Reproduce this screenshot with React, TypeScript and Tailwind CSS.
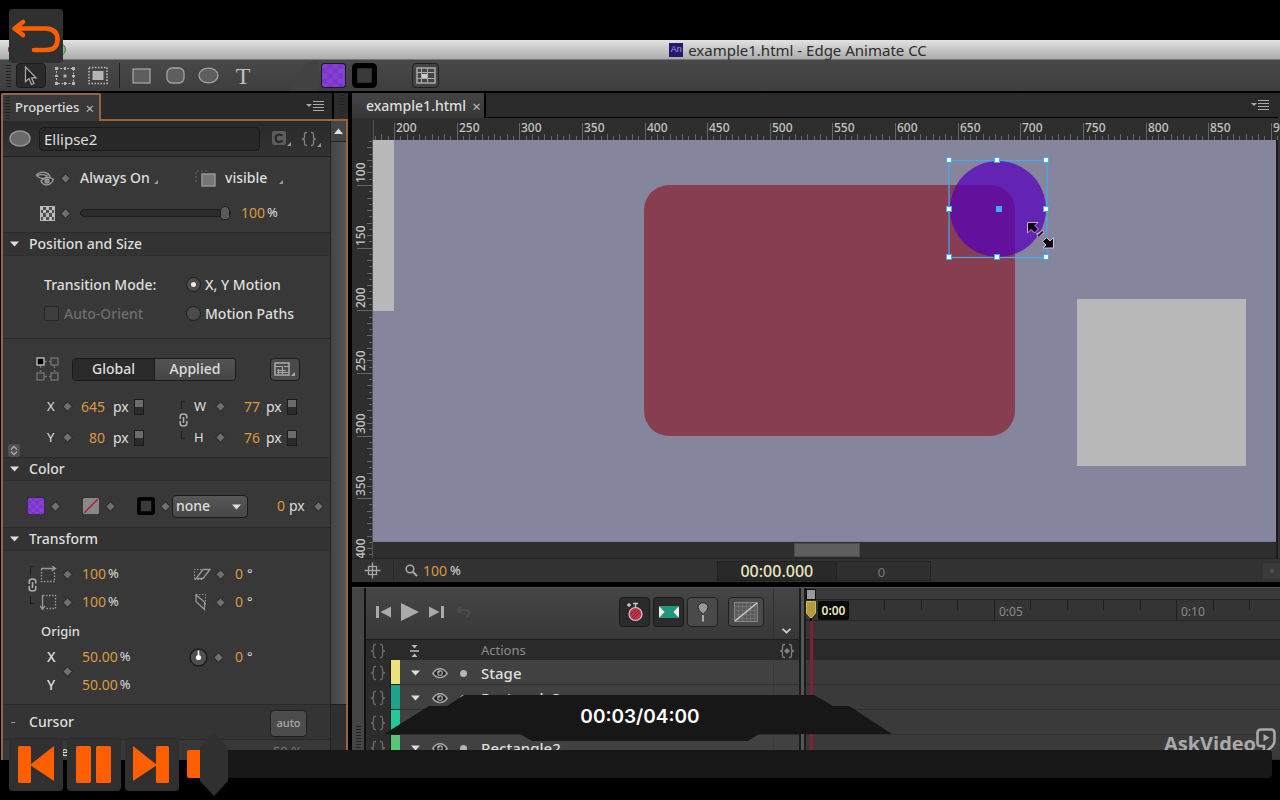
import React, { useState } from "react";

const ORANGE = "#ff5f00";

const Diamond = ({ label }: { label: string }) => (
  <button aria-label={label} className="flex w-5 shrink-0 items-center justify-center">
    <svg width="11" height="11" viewBox="0 0 11 11">
      <path d="M5.5 0.8 10.2 5.5 5.5 10.2 0.8 5.5Z" fill="#707070" stroke="#1f1f1f" />
    </svg>
  </button>
);

const Corner = () => (
  <svg width="4" height="4" viewBox="0 0 5 5" className="shrink-0">
    <path d="M5 0V5H0Z" fill="#999" />
  </svg>
);

const Braces = ({ dot = false, dim = false }: { dot?: boolean; dim?: boolean }) => (
  <svg width="16" height="16" viewBox="0 0 16 16" fill="none" stroke={dim ? "#6a6a6a" : "#808080"} strokeWidth="1.3">
    <path d="M6 1.5H5Q3.5 1.5 3.5 3.5V6Q3.5 8 1 8Q3.5 8 3.5 10V12.5Q3.5 14.5 5 14.5H6" />
    <path d="M10 1.5H11Q12.5 1.5 12.5 3.5V6Q12.5 8 15 8Q12.5 8 12.5 10V12.5Q12.5 14.5 11 14.5H10" />
    {dot && <path d="M8 5 11 8 8 11 5 8Z" fill="#808080" stroke="none" />}
  </svg>
);

const Grip = () => (
  <svg width="5" height="26" viewBox="0 0 5 26" stroke="#222">
    {Array.from({ length: 8 }, (_, i) => (
      <path key={i} d={`M0 ${i * 3 + 2.5}H5`} />
    ))}
  </svg>
);

const Eye = () => (
  <svg width="16" height="12" viewBox="0 0 16 12">
    <path d="M0.8 6.5Q4 1.8 8 1.8T15.2 6.5Q12 10.6 8 10.6T0.8 6.5Z" fill="#222" stroke="#a9a9a9" strokeWidth="1.4" />
    <circle cx="8" cy="6" r="3" fill="#9a9a9a" />
    <circle cx="8" cy="6" r="1.6" fill="#222" />
    <circle cx="7" cy="5" r="0.8" fill="#ddd" />
  </svg>
);

const PanelMenu = () => (
  <button aria-label="Panel menu">
    <svg width="18" height="12" viewBox="0 0 18 12">
      <path d="M0 4H6L3 7Z" fill="#aaa" />
      <path d="M7 1.5H18M7 4.5H18M7 7.5H18M7 10.5H18" stroke="#aaa" />
    </svg>
  </button>
);

const Chain = () => (
  <svg width="9" height="14" viewBox="0 0 9 14" fill="none" stroke="#aaa" strokeWidth="1.6">
    <path d="M1.2 6V3.5Q1.2 1 4.5 1T7.8 3.5V5.5M1.2 8V10.5Q1.2 13 4.5 13T7.8 10.5V8M4.5 4V10" />
  </svg>
);

const LinkBracket = ({ label }: { label: string }) => (
  <button aria-label={label} className="flex w-3 flex-col items-center gap-1">
    <span className="h-2 w-1 border-l border-t border-[#1e1e1e]" />
    <Chain />
    <span className="h-2 w-1 border-b border-l border-[#1e1e1e]" />
  </button>
);

const UnitToggle = ({ label }: { label: string }) => (
  <button aria-label={label} className="flex h-4 w-[10px] shrink-0 flex-col border border-[#1c1c1c] bg-[#2b2b2b]">
    <span className="h-[7px] w-full bg-[#6b6b6b]" />
  </button>
);

const Num = ({ children, className = "" }: { children: React.ReactNode; className?: string }) => (
  <span className={`text-sm text-[#d99b3f] ${className}`}>{children}</span>
);

const SectionHeader = ({ title }: { title: string }) => (
  <h2 className="flex h-6 shrink-0 items-center border-y border-t-[#2a2a2a] border-b-[#2f2f2f] bg-[#333] text-sm font-medium">
    <button className="flex items-center gap-[10px] pl-[7px]">
      <svg width="9" height="6" viewBox="0 0 9 6">
        <path d="M0 0.5H9L4.5 5.5Z" fill="#ddd" />
      </svg>
      {title}
    </button>
  </h2>
);

const Swatch = ({ kind, size }: { kind: "purple" | "none" | "stroke"; size: number }) => (
  <svg width={size} height={size} viewBox="0 0 24 24">
    {kind === "purple" && (
      <>
        <rect x="0.5" y="0.5" width="23" height="23" rx="3" fill="#8840da" stroke="#1c1c1c" />
        <path d="M1 5h5v5H1zM11 5h5v5h-5zM6 10h5v5H6zM16 10h5v5h-5zM1 15h5v5H1zM11 15h5v5h-5zM6 1h5v4H6zM16 1h5v4h-5zM6 20h5v3H6zM16 20h5v3h-5z" fill="#7838c4" />
      </>
    )}
    {kind === "none" && (
      <>
        <rect x="0.5" y="0.5" width="23" height="23" rx="3" fill="#888" stroke="#1c1c1c" />
        <path d="M3 21 21 3" stroke="#b01c3a" strokeWidth="2" />
      </>
    )}
    {kind === "stroke" && <rect x="2.5" y="2.5" width="19" height="19" rx="2" fill="#3a3a3a" stroke="#000" strokeWidth="5" />}
  </svg>
);

const ToolBar = () => (
  <div className="flex h-[33px] shrink-0 items-center border-b-2 border-black bg-linear-to-b from-[#484848] to-[#3e3e3e] pl-[6px]">
    <Grip />
    <button aria-label="Selection" className="ml-[5px] flex h-[25px] w-[30px] items-center justify-center rounded border border-[#1c1c1c] bg-[#2a2a2a]">
      <svg width="14" height="20" viewBox="0 0 14 20">
        <path d="M1.5 1V15.5L5 12.5 7.5 18.5 10 17.5 7.5 11.8H12Z" fill="#1e1e1e" stroke="#a8a8a8" strokeWidth="1.3" />
      </svg>
    </button>
    <button aria-label="Transform" className="ml-2">
      <svg width="22" height="20" viewBox="0 0 22 20" fill="#b4b4b4">
        <path d="M2.5 2.5H19.5V17.5H2.5Z" fill="none" stroke="#b4b4b4" strokeDasharray="2 1.5" />
        <path d="M1 1h3v3H1zM18 1h3v3h-3zM1 16h3v3H1zM18 16h3v3h-3zM10 1h2v3h-2zM10 16h2v3h-2zM1 9h3v2H1zM18 9h3v2h-3zM9.500 8.500h3v3h-3z" />
      </svg>
    </button>
    <button aria-label="Clipping" className="ml-3">
      <svg width="20" height="19" viewBox="0 0 20 19">
        <path d="M1 1.500H19V17.500H1Z" fill="none" stroke="#bbb" strokeWidth="1.6" strokeDasharray="1.500 1.500" />
        <rect x="4.500" y="5" width="11" height="9" fill="#b5b5b5" />
      </svg>
    </button>
    <span className="ml-[11px] h-[25px] w-px bg-[#1f1f1f]" />
    <button aria-label="Rectangle" className="ml-3">
      <svg width="19" height="16" viewBox="0 0 19 16">
        <rect x="1" y="1" width="17" height="14" fill="#5e5e5e" stroke="#a2a2a2" strokeWidth="1.3" />
      </svg>
    </button>
    <button aria-label="Rounded rectangle" className="ml-[15px]">
      <svg width="19" height="17" viewBox="0 0 19 17">
        <rect x="1" y="1" width="17" height="15" rx="5" fill="#5e5e5e" stroke="#a2a2a2" strokeWidth="1.3" />
      </svg>
    </button>
    <button aria-label="Ellipse" className="ml-[13px]">
      <svg width="21" height="17" viewBox="0 0 21 17">
        <ellipse cx="10.500" cy="8.500" rx="9.500" ry="7.300" fill="#5e5e5e" stroke="#a2a2a2" strokeWidth="1.3" />
      </svg>
    </button>
    <button className="ml-4 w-4 text-center font-['Liberation_Serif',serif] text-2xl leading-6 text-[#c0c0c0]">T</button>
    <svg width="30" height="31" viewBox="0 0 30 32" className="ml-[38px]">
      <path d="M0 32Q6 18 14 7Q20 1 30 0V32Z" fill="#424242" />
    </svg>
    <button aria-label="Background color" className="ml-[2px]">
      <Swatch kind="purple" size={25} />
    </button>
    <button aria-label="Border color" className="ml-[6px]">
      <Swatch kind="stroke" size={25} />
    </button>
    <button aria-label="Layout defaults" className="ml-[35px] flex h-[25px] w-[27px] items-center justify-center rounded border border-[#1f1f1f] bg-[#444]">
      <svg width="20" height="17" viewBox="0 0 20 17" fill="none" stroke="#aaa">
        <path d="M1 1H19V16H1Z" strokeWidth="1.500" />
        <path d="M1 5.500H19M1 11.500H19M5.500 1V16M11.500 1V16" strokeWidth="1" />
        <path d="M6 7h5v4H6z" fill="#ccc" stroke="none" />
      </svg>
    </button>
  </div>
);

const ScaleRow = ({ icon, value, skewIcon, label }: { icon: React.ReactNode; value: string; skewIcon: React.ReactNode; label: string }) => (
  <div className="flex h-7 items-center">
    <span className="w-[17px]">{icon}</span>
    <Diamond label={`Scale ${label} keyframe`} />
    <Num className="ml-[5px]">{value}</Num>
    <span className="ml-[2px] w-[85px]">%</span>
    <span className="w-[17px]">{skewIcon}</span>
    <Diamond label={`Skew ${label} keyframe`} />
    <Num className="ml-[5px]">0</Num>
    <span className="ml-1">°</span>
  </div>
);

const PositionRow = ({ a, av, b, bv }: { a: string; av: string; b: string; bv: string }) => (
  <div className="flex h-[31px] items-center text-sm">
    <span className="w-[10px] text-[13px]">{a}</span>
    <Diamond label={`${a} keyframe`} />
    <Num className="w-7 text-right">{av}</Num>
    <span className="ml-2 w-[21px]">px</span>
    <UnitToggle label={`${a} unit`} />
    <span className="ml-[50px] w-4 text-[13px]">{b}</span>
    <Diamond label={`${b} keyframe`} />
    <Num className="w-[30px] text-right">{bv}</Num>
    <span className="ml-[6px] w-[21px]">px</span>
    <UnitToggle label={`${b} unit`} />
  </div>
);

const PropertiesPanel = () => {
  const [name, setName] = useState("Ellipse2");
  const [opacity, setOpacity] = useState(100);
  const [mode, setMode] = useState("xy");

  return (
    <aside className="flex w-[348px] shrink-0 flex-col pl-px">
      <div className="flex h-[26px] shrink-0">
        <div className="z-10 -mb-[2px] flex w-[100px] shrink-0 items-center rounded-t-xs border-2 border-b-0 border-[#94653f] bg-[#383838] pl-[2px]">
          <Grip />
          <span className="ml-[5px] text-[13px] font-medium">Properties</span>
          <button aria-label="Close Properties" className="ml-[6px] text-[15px] leading-5 text-[#bbb]">×</button>
        </div>
        <div className="flex flex-1 items-center justify-end bg-[#292929] pr-2">
          <PanelMenu />
        </div>
        <div className="ml-[2px] flex w-[14px] items-center justify-center bg-[#2d2d2d]">
          <Grip />
        </div>
      </div>

      <div className="flex min-h-0 flex-1 border-x-2 border-t-2 border-[#94653f] bg-[#383838]">
        <div className="min-w-0 flex-1 overflow-hidden">
          <div className="flex h-9 items-center border-b border-[#202020] bg-linear-to-b from-[#292929] to-[#333] pl-[6px]">
            <svg width="22" height="17" viewBox="0 0 22 17">
              <ellipse cx="11" cy="8.500" rx="10" ry="7.500" fill="#6a6a6a" stroke="#939393" strokeWidth="1.500" />
            </svg>
            <input
              aria-label="Element name"
              value={name}
              onChange={(e) => setName(e.target.value)}
              className="ml-2 h-6 w-[221px] rounded-sm border border-[#1a1a1a] bg-[#282828] px-1 text-[15px] outline-none"
            />
            <button aria-label="Class" className="ml-3 flex items-end">
              <svg width="15" height="15" viewBox="0 0 15 15">
                <rect width="14" height="14" rx="2" fill="#5c5c5c" />
                <path d="M10.500 4.800Q9 3.400 7.200 3.400 3.600 3.600 3.600 7.200T7.200 11Q9 11 10.500 9.600" fill="none" stroke="#262626" strokeWidth="2" />
              </svg>
              <Corner />
            </button>
            <button aria-label="Open actions" className="ml-[10px] flex items-end">
              <Braces />
              <Corner />
            </button>
          </div>

          <div className="flex h-[42px] items-center pl-8 text-sm font-medium">
            <svg width="20" height="18" viewBox="0 0 20 18" fill="#2a2a2a" stroke="#999" strokeWidth="1.400">
              <path d="M1 6.500Q5 2 10 3.500 14 4.500 15 8" fill="none" />
              <path d="M2 7Q6 4 12 7 9 12 2 7Z" />
              <path d="M6 12Q12 6 18.500 10.500 16 16 11 16 7 15 6 12Z" />
              <circle cx="12" cy="12" r="2" fill="#888" />
            </svg>
            <Diamond label="Display keyframe" />
            <button className="ml-[5px] flex w-[115px] items-end gap-1">
              Always On <span className="pb-1"><Corner /></span>
            </button>
            <svg width="21" height="17" viewBox="0 0 21 17">
              <path d="M1 12V1H14" fill="none" stroke="#666" strokeDasharray="2 2" />
              <rect x="7" y="4" width="13" height="12" fill="#777" stroke="#999" strokeWidth="1.400" />
            </svg>
            <button className="ml-[9px] flex items-end gap-3">
              visible <span className="pb-1"><Corner /></span>
            </button>
          </div>

          <div className="flex h-7 items-center pl-[37px]">
            <svg width="15" height="15" viewBox="0 0 15 15">
              <rect width="15" height="15" fill="#bbb" />
              <path d="M3 1h3v3H3zM9 1h3v3H9zM1 4h2v3H1zM6 4h3v3H6zM12 4h2v3h-2zM3 7h3v4H3zM9 7h3v4H9zM6 11h3v3H6zM1 11h2v3H1zM12 11h2v3h-2z" fill="#4c4c4c" />
            </svg>
            <Diamond label="Opacity keyframe" />
            <input
              type="range"
              aria-label="Opacity"
              value={opacity}
              onChange={(e) => setOpacity(Number(e.target.value))}
              className="ml-[5px] h-2 w-[151px] appearance-none rounded border border-[#1d1d1d] bg-[#2c2c2c] [&::-webkit-slider-thumb]:h-[14px] [&::-webkit-slider-thumb]:w-[10px] [&::-webkit-slider-thumb]:appearance-none [&::-webkit-slider-thumb]:rounded-sm [&::-webkit-slider-thumb]:rounded-t-md [&::-webkit-slider-thumb]:border [&::-webkit-slider-thumb]:border-[#1d1d1d] [&::-webkit-slider-thumb]:bg-[#5a5a5a]"
            />
            <Num className="ml-[10px]">{opacity}</Num>
            <span className="ml-[2px]">%</span>
          </div>

          <div className="mt-[5px]" />
          <SectionHeader title="Position and Size" />

          <div className="grid h-[83px] grid-cols-[142px_1fr] content-center border-b border-[#2a2a2a] pt-1 pl-[41px] text-sm font-medium">
            <span className="flex h-[29px] items-center">Transition Mode:</span>
            <label className="flex h-[29px] items-center gap-1">
              <input type="radio" name="mode" checked={mode === "xy"} onChange={() => setMode("xy")} className="flex size-[15px] appearance-none items-center justify-center rounded-full border border-[#1d1d1d] bg-[#4b4b4b] checked:before:size-[5px] checked:before:rounded-full checked:before:bg-[#eee] checked:before:content-['']" />
              X, Y Motion
            </label>
            <label className="flex h-[29px] items-center gap-[5px] text-[#6f6f6f]">
              <input type="checkbox" disabled className="size-[15px] appearance-none rounded-xs border border-[#262626] bg-[#3e3e3e]" />
              Auto-Orient
            </label>
            <label className="flex h-[29px] items-center gap-1">
              <input type="radio" name="mode" checked={mode === "paths"} onChange={() => setMode("paths")} className="flex size-[15px] appearance-none items-center justify-center rounded-full border border-[#1d1d1d] bg-[#4b4b4b] checked:before:size-[5px] checked:before:rounded-full checked:before:bg-[#eee] checked:before:content-['']" />
              Motion Paths
            </label>
          </div>

          <div className="flex h-[52px] items-center pt-2 pl-[33px] text-sm font-medium">
            <button aria-label="Origin corner">
              <svg width="23" height="24" viewBox="0 0 23 24" fill="none" stroke="#707070" strokeWidth="1.400">
                <path d="M8 4.500H15M4.500 8V15M8 19.500H15M18.500 8V15" strokeDasharray="3 2" />
                <rect x="15" y="1" width="7" height="7" />
                <rect x="1" y="16" width="7" height="7" />
                <rect x="15" y="16" width="7" height="7" />
                <rect x="1" y="1" width="7" height="7" fill="#000" stroke="#bbb" />
              </svg>
            </button>
            <div className="ml-[13px] flex h-[23px] overflow-hidden rounded-sm border border-[#1b1b1b]">
              <button className="w-[81px] bg-[#2a2a2a]">Global</button>
              <button className="w-[81px] border-l border-[#1b1b1b] bg-linear-to-b from-[#535353] to-[#454545]">Applied</button>
            </div>
            <button aria-label="Layout preset" className="ml-[34px] flex h-[23px] w-[30px] items-center justify-center rounded-sm border border-[#1b1b1b] bg-[#4a4a4a]">
              <svg width="22" height="14" viewBox="0 0 22 14" fill="none" stroke="#aaa">
                <path d="M1 1H15V13H1Z" strokeWidth="1.500" />
                <path d="M1 4.500H8M10 4.500H15M3 8.500H12M4.500 7V12M8.500 4V12M3 10.500H14" />
                <path d="M21 10V14H17Z" fill="#aaa" stroke="none" />
              </svg>
            </button>
          </div>

          <div className="relative pl-11">
            <PositionRow a="X" av="645" b="W" bv="77" />
            <PositionRow a="Y" av="80" b="H" bv="76" />
            <div className="absolute top-[10px] left-[174px]">
              <LinkBracket label="Link width and height" />
            </div>
            <button aria-label="More" className="absolute -bottom-1 left-[5px] flex h-[13px] w-3 items-center justify-center rounded-xs bg-[#505050]">
              <svg width="8" height="11" viewBox="0 0 8 11" fill="none" stroke="#aaa" strokeWidth="1.300">
                <path d="M1 4.500 4 1.500 7 4.500M1 6.500 4 9.500 7 6.500" />
              </svg>
            </button>
          </div>

          <div className="mt-1" />
          <SectionHeader title="Color" />

          <div className="flex h-[46px] items-center pt-1 pl-6 text-sm">
            <button aria-label="Fill color">
              <Swatch kind="purple" size={18} />
            </button>
            <Diamond label="Fill keyframe" />
            <button aria-label="Gradient" className="ml-[17px]">
              <Swatch kind="none" size={18} />
            </button>
            <Diamond label="Gradient keyframe" />
            <button aria-label="Stroke color" className="ml-[17px]">
              <Swatch kind="stroke" size={18} />
            </button>
            <Diamond label="Stroke keyframe" />
            <div className="relative -ml-[3px]">
              <select aria-label="Border style" className="h-[23px] w-[76px] appearance-none rounded-sm border border-[#1b1b1b] bg-linear-to-b from-[#565656] to-[#474747] pl-[3px] text-sm leading-5 font-medium">
                <option>none</option>
                <option>solid</option>
              </select>
              <svg width="9" height="6" viewBox="0 0 9 6" className="pointer-events-none absolute top-[9px] right-[7px]">
                <path d="M0 0.500H9L4.500 5.500Z" fill="#ddd" />
              </svg>
            </div>
            <Num className="ml-[29px]">0</Num>
            <span className="mr-1 ml-1">px</span>
            <Diamond label="Border width keyframe" />
          </div>

          <SectionHeader title="Transform" />

          <div className="relative pt-[9px] pl-[37px]">
            <div className="absolute top-[15px] left-[23px]">
              <LinkBracket label="Link scale" />
            </div>
            <ScaleRow
              label="X"
              value="100"
              icon={
                <svg width="17" height="17" viewBox="0 0 17 17" fill="none" stroke="#999">
                  <path d="M1 2.500H15M12 0 15.500 2.500 12 5" strokeWidth="1.300" />
                  <path d="M1.500 3V15.500H14.500V6" strokeDasharray="1.500 1.500" strokeWidth="1.400" />
                </svg>
              }
              skewIcon={
                <svg width="18" height="13" viewBox="0 0 18 13" fill="none" stroke="#999">
                  <path d="M1.500 11V1.500H10M1.500 11.500H9" strokeDasharray="1.500 1.500" />
                  <path d="M10 1.500H17L10 10.500H3Z" strokeWidth="1.300" />
                </svg>
              }
            />
            <ScaleRow
              label="Y"
              value="100"
              icon={
                <svg width="17" height="17" viewBox="0 0 17 17" fill="none" stroke="#999">
                  <path d="M2.500 1V15M0 12 2.500 15.500 5 12" strokeWidth="1.300" />
                  <path d="M3 1.500H15.500V14.500H6" strokeDasharray="1.500 1.500" strokeWidth="1.400" />
                </svg>
              }
              skewIcon={
                <svg width="14" height="18" viewBox="0 0 14 18" fill="none" stroke="#999">
                  <path d="M3 1.500H12.500V12" strokeDasharray="1.500 1.500" />
                  <path d="M3 2V8.500L11.500 16.500V9Z" strokeWidth="1.300" />
                </svg>
              }
            />
            <div className="mt-[5px] flex h-[22px] items-center pl-px text-[13px] font-medium">Origin</div>
            <div className="flex items-center pl-[7px]">
              <div className="w-[10px] text-sm font-medium">
                <div className="h-7 leading-7">X</div>
                <div className="h-7 leading-7">Y</div>
              </div>
              <Diamond label="Origin keyframe" />
              <div className="w-[112px] pl-[5px]">
                <div className="flex h-7 items-center gap-[2px]"><Num>50.00</Num>%</div>
                <div className="flex h-7 items-center gap-[2px]"><Num>50.00</Num>%</div>
              </div>
              <div className="flex h-7 items-center self-start">
                <button aria-label="Rotation">
                  <svg width="19" height="19" viewBox="0 0 19 19">
                    <circle cx="9.500" cy="9.500" r="8.500" fill="#4e4e4e" stroke="#1c1c1c" strokeWidth="1.500" />
                    <path d="M9.500 2.500V9" stroke="#fff" strokeWidth="1.500" />
                    <circle cx="9.500" cy="9.500" r="2.600" fill="#fff" />
                  </svg>
                </button>
                <Diamond label="Rotation keyframe" />
                <Num className="ml-[7px]">0</Num>
                <span className="ml-1">°</span>
              </div>
            </div>
          </div>

          <h2 className="mt-[5px] flex h-9 items-center border-y border-[#2a2a2a] bg-[#343434] pr-[23px] pl-2 text-sm font-medium">
            <button className="flex items-center gap-[14px]">
              <span className="h-px w-1 bg-[#999]" />
              Cursor
            </button>
            <button className="mt-[2px] ml-auto h-[27px] w-[37px] rounded-sm border border-[#1f1f1f] bg-[#4c4c4c] text-[11px] text-[#a9a9a9]">auto</button>
          </h2>
          <div className="flex h-6 items-center justify-between pr-7 pl-[58px] text-[13px] text-[#777]">
            <span className="font-medium text-[#ddd]">e</span>
            <span>50 %</span>
          </div>
        </div>

        {/* scrollbar */}
        <div className="flex w-4 shrink-0 flex-col border-l border-[#222] bg-[#2f2f2f]">
          <button aria-label="Scroll up" className="flex h-[21px] items-center justify-center border-b border-[#222] bg-[#444]">
            <svg width="9" height="6" viewBox="0 0 9 6">
              <path d="M0 6H9L4.500 0.500Z" fill="#ddd" />
            </svg>
          </button>
          <div className="h-[563px] border-b border-[#1c1c1c] bg-linear-to-r from-[#444] to-[#565656]" />
        </div>
      </div>
    </aside>
  );
};

const UNIT = 1.2525;

const HorizontalRuler = () => (
  <svg width="100%" height="22" className="block bg-[#2e2e2e]" fontSize="12" fontWeight="500" fill="#c4c4c4">
    <path d="M0.500 2V22" stroke="#555" />
    {Array.from({ length: 146 }, (_, i) => {
      const value = 185 + i * 5;
      const x = Math.round(21 + (value - 200) * UNIT) + 0.5;
      const top = value % 50 === 0 ? 5 : value % 10 === 0 ? 16 : 18;
      return <path key={value} d={`M${x} ${top}V22`} stroke="#666" />;
    })}
    {Array.from({ length: 15 }, (_, i) => (
      <text key={i} x={Math.round(23 + i * 50 * UNIT)} y="14">{200 + i * 50}</text>
    ))}
  </svg>
);

const VerticalRuler = () => (
  <svg width="21" height="100%" className="block bg-[#2e2e2e]" fontSize="12" fontWeight="500" fill="#c4c4c4">
    <path d="M20.500 0V450" stroke="#555" />
    {Array.from({ length: 68 }, (_, i) => {
      const value = 65 + i * 5;
      const y = Math.round(45 + (value - 100) * UNIT) + 0.5;
      const left = value % 50 === 0 ? 5 : value % 10 === 0 ? 15 : 17;
      return <path key={value} d={`M${left} ${y}H20`} stroke="#666" />;
    })}
    {Array.from({ length: 7 }, (_, i) => {
      const y = Math.round(43 + i * 50 * UNIT);
      return <text key={i} x="13" y={y} transform={`rotate(-90 13 ${y})`}>{100 + i * 50}</text>;
    })}
  </svg>
);

const Stage = () => (
  <div className="relative min-h-0 flex-1 overflow-hidden border-b border-[#7676a8] bg-[#85869e]">
    <div className="absolute top-0 left-0 h-[171px] w-[21px] bg-[#b9b9b9]" />
    <div className="absolute top-[45px] left-[271px] h-[251px] w-[371px] rounded-[25px] bg-[#873e50]" />
    <div className="absolute top-[159px] left-[704px] h-[167px] w-[169px] bg-[#b8b8b8]" />
    {/* selected ellipse with its handles and the resize cursor */}
    <svg width="120" height="120" viewBox="0 0 120 120" className="absolute top-[14px] left-[570px]">
      <circle cx="55" cy="55" r="48" fill="rgb(87 0 187 / .73)" />
      <rect x="6" y="6.500" width="98" height="97" fill="none" stroke="#42aaf5" strokeWidth="1.200" />
      {[6, 54, 103].map((x) =>
        [6, 55, 103].map((y) =>
          x === 54 && y === 55 ? (
            <rect key="c" x="53" y="52" width="6" height="6" fill="#42aaf5" />
          ) : (
            <rect key={`${x}-${y}`} x={x - 2.5} y={y - 2.5} width="5" height="5" fill="#fff" stroke="#42aaf5" />
          )
        )
      )}
      <path d="M84.500 68.500H95L92 71.500 95.500 75 91.500 79 88 75.500 84.500 79Z" fill="#0c0410" stroke="#cf9fe0" />
      <path d="M94 81.500 101 77.500" stroke="#c9a0da" strokeWidth="4" />
      <path d="M95 82 100 77.500" stroke="#222" strokeWidth="1.800" />
      <path d="M110.500 94H100L103 91 99.500 87.500 103.500 83.500 107 87 110.500 83.500Z" fill="#0c0410" stroke="#cfc0dc" />
    </svg>
  </div>
);

const StatusBar = () => (
  <div className="flex h-6 shrink-0 items-center border-t border-[#222] bg-[#323232]">
    <button aria-label="Center stage" className="flex w-[41px] justify-center">
      <svg width="17" height="17" viewBox="0 0 17 17" fill="none" stroke="#a5a5a5" strokeWidth="1.300">
        <path d="M8.500 0.500V16.500M0.500 8.500H16.500" />
        <rect x="4.500" y="4.500" width="8" height="8" />
      </svg>
    </button>
    <span className="h-5 w-px bg-[#282828]" />
    <svg width="13" height="13" viewBox="0 0 13 13" fill="none" stroke="#aaa" strokeWidth="1.500" className="ml-[11px]">
      <circle cx="5" cy="5" r="3.800" />
      <path d="M8 8 12 12" strokeWidth="2" />
    </svg>
    <Num className="ml-[5px]">100</Num>
    <span className="ml-[3px]">%</span>
    <div className="ml-[256px] flex h-5 w-[214px] items-center border border-[#222] bg-[#292929]">
      <span className="w-[118px] text-center text-base leading-5 font-medium text-[#e9e6bd]">00:00.000</span>
      <span className="h-full flex-1 border-l border-[#222] bg-[#2f2f2f] pr-1 text-center text-[13px] leading-5 text-[#777]">0</span>
    </div>
    <button aria-label="Status options" className="ml-auto flex h-4 w-[17px] items-center justify-center bg-[#3a3a3a]">
      <span className="size-1 rounded-full bg-[#555]" />
    </button>
  </div>
);

const StagePanel = () => (
  <section className="flex min-h-0 flex-1 flex-col border-b-5 border-black">
    <div className="flex h-[25px] shrink-0 bg-[#2a2a2a] pr-[2px]">
      <div className="flex w-[134px] shrink-0 items-center border-r-2 border-black bg-linear-to-b from-[#444] to-[#363636] pl-[14px]">
        <span className="text-sm font-medium">example1.html</span>
        <button aria-label="Close example1.html" className="ml-[6px] text-[15px] leading-5 text-[#bbb]">×</button>
      </div>
      <div className="flex flex-1 items-center justify-end border-b border-black pr-[9px]">
        <PanelMenu />
      </div>
    </div>
    <div className="flex h-[22px] shrink-0 overflow-hidden bg-[#2e2e2e]">
      <div className="w-[21px] shrink-0" />
      <div className="min-w-0 flex-1 overflow-hidden">
        <HorizontalRuler />
      </div>
    </div>
    <div className="flex min-h-0 flex-1">
      <VerticalRuler />
      <div className="flex min-w-0 flex-1 flex-col">
        <Stage />
        <div className="flex h-4 shrink-0 bg-[#2e2e2e] py-px">
          <div className="ml-[421px] w-[66px] border border-[#4a4a4a] bg-[#5e5e5e]" />
        </div>
      </div>
      <div className="w-1 border-l-2 border-[#1c1c1c] bg-[#333]" />
    </div>
    <StatusBar />
  </section>
);

const layers = [
  { name: "Stage", color: "#ede37c" },
  { name: "Rectangle3", color: "#1ba38c" },
  { name: "Ellipse2", color: "#23c998" },
  { name: "Rectangle2", color: "#55c777" },
];

const TimelinePanel = () => (
  <section className="flex h-[173px] shrink-0 border-t border-[#555] bg-[#3a3a3a]">
    <div className="flex w-[14px] shrink-0 items-end border-r-2 border-[#111] bg-[#454545] pb-[10px] pl-1">
      <Grip />
    </div>
    <div className="flex w-[433px] shrink-0 flex-col">
      <div className="flex h-[52px] shrink-0 border-b border-[#1e1e1e] bg-linear-to-b from-[#454545] to-[#383838]">
        <div className="flex flex-1 items-center pb-[3px] pl-[9px]">
          <button aria-label="Go to start">
            <svg width="17" height="14" viewBox="0 0 17 14" fill="#aaa">
              <path d="M1 1H4V13H1ZM16 1.500V12.500L5.500 7Z" />
            </svg>
          </button>
          <button aria-label="Play" className="ml-2">
            <svg width="20" height="20" viewBox="0 0 20 20">
              <path d="M1 1 19 10 1 19Z" fill="#aaa" />
            </svg>
          </button>
          <button aria-label="Go to end" className="ml-2">
            <svg width="17" height="14" viewBox="0 0 17 14" fill="#aaa">
              <path d="M16 1H13V13H16ZM1 1.500V12.500L11.500 7Z" />
            </svg>
          </button>
          <svg width="14" height="12" viewBox="0 0 14 12" fill="none" stroke="#4c4c4c" strokeWidth="2" className="ml-[11px]">
            <path d="M5 1 1.500 4 5 7M2 4H10Q13 4 13 7T10 10.500" />
          </svg>
          <button aria-label="Auto-keyframe" className="ml-[149px] flex h-[30px] w-[31px] items-center justify-center rounded border border-[#1a1a1a] bg-[#2b2b2b]">
            <svg width="18" height="20" viewBox="0 0 18 20">
              <circle cx="9.500" cy="12" r="6.500" fill="#c53448" stroke="#ccc" strokeWidth="1.200" />
              <path d="M6 15 13 8M7 17 14 10M4.500 12.500 10 7.500" stroke="#7d2030" />
              <path d="M9.500 5V2M7 1.500H12M1 3H5M3 1V5" stroke="#ccc" strokeWidth="1.300" />
            </svg>
          </button>
          <button aria-label="Auto-transition" className="ml-[3px] flex h-[30px] w-[31px] items-center justify-center rounded border border-[#1a1a1a] bg-[#2b2b2b]">
            <svg width="20" height="14" viewBox="0 0 20 14">
              <rect x="1" y="1" width="18" height="12" fill="#23957b" />
              <path d="M0 1 5.500 7 0 13ZM20 1 14.500 7 20 13Z" fill="#eee" />
            </svg>
          </button>
          <button aria-label="Toggle pin" className="ml-[3px] flex h-[30px] w-[31px] items-center justify-center rounded border border-[#1f1f1f] bg-[#4a4a4a]">
            <svg width="12" height="20" viewBox="0 0 12 20">
              <path d="M6 12.500Q1 8 1 5.500A5 4.800 0 0 1 11 5.500Q11 8 6 12.500Z" fill="#999" stroke="#222" />
              <path d="M6 13V19.500" stroke="#ccc" strokeWidth="1.500" />
            </svg>
          </button>
          <button aria-label="Easing" className="ml-[10px] flex h-[30px] w-9 items-center justify-center rounded border border-[#1f1f1f] bg-[#4a4a4a]">
            <svg width="24" height="20" viewBox="0 0 24 20">
              <path d="M0.500 0.500H23.500V19.500H0.500Z" fill="#5b5b5b" stroke="#888" />
              <path d="M4.500 0V20M8.500 0V20M12.500 0V20M16.500 0V20M20.500 0V20M0 4.500H24M0 8.500H24M0 12.500H24M0 16.500H24" stroke="#7a7a7a" strokeWidth="0.600" />
              <path d="M1 19 23 1" stroke="#ccc" strokeWidth="1.500" />
            </svg>
          </button>
        </div>
        <div className="flex w-[26px] items-end justify-center border-l border-[#303030] pb-[5px]">
          <button aria-label="Playback options">
            <svg width="9" height="6" viewBox="0 0 9 6" fill="none" stroke="#ccc" strokeWidth="1.800">
              <path d="M0.500 0.800 4.500 4.500 8.500 0.800" />
            </svg>
          </button>
        </div>
      </div>
      <div className="flex h-5 shrink-0 items-center bg-[#2a2a2a] pt-px pr-1 pl-1 text-[13px] text-[#8d8d8d]">
        <Braces dim />
        <svg width="9" height="12" viewBox="0 0 9 12" className="ml-[24px] shrink-0">
          <path d="M1.500 0H7.500L4.500 3.500ZM1.500 12H7.500L4.500 8.500Z" fill="#bbb" />
          <path d="M0 6H9" stroke="#bbb" strokeWidth="1.500" />
        </svg>
        <span className="ml-[62px] flex-1">Actions</span>
        <Braces dot />
      </div>
      <ul className="min-h-0 flex-1 overflow-hidden">
        {layers.map((layer) => (
          <li key={layer.name} className="flex h-[25px] items-center bg-[#414141] text-[15px] leading-5 font-medium">
            <span className="flex h-full w-[25px] items-center border-r border-[#1d1d1d] bg-[#2c2c2c] pt-px pl-1">
              <Braces dim />
            </span>
            <span className="h-full w-[9px] border-b border-[#1d1d1d]" style={{ backgroundColor: layer.color }} />
            <span className="flex h-full flex-1 items-center border-b border-[#2f2f2f] pt-[2px]">
              <button aria-label={`Expand ${layer.name}`} className="ml-[11px]">
                <svg width="9" height="6" viewBox="0 0 9 6">
                  <path d="M0 0.500H9L4.500 5.500Z" fill="#ddd" />
                </svg>
              </button>
              <button aria-label={`Show ${layer.name}`} className="ml-3">
                <Eye />
              </button>
              <span className="ml-3 size-[7px] rounded-full bg-[#b5b5b5]" />
              <span className="ml-[14px] flex-1">{layer.name}</span>
              <span className="h-full w-[26px] border-l border-[#383838]" />
            </span>
          </li>
        ))}
      </ul>
    </div>
    <div className="w-[7px] shrink-0 border-x-2 border-[#1c1c1c] bg-[#555]" />
    <div className="relative min-w-0 flex-1">
      <div className="h-3 border-b border-[#222] bg-[#3a3a3a]" />
      <svg width="100%" height="20" className="block bg-[#343434]" fontSize="12" fill="#8b8b8b">
        {Array.from({ length: 13 }, (_, i) => {
          const x = Math.round(5 + i * 36.5) + 0.5;
          return <path key={i} d={`M${x} 0V${i % 5 === 0 ? 20 : 10}`} stroke="#202020" />;
        })}
        <text x="193" y="16">0:05</text>
        <text x="375" y="16">0:10</text>
      </svg>
      <div className="h-5 border-y border-t-[#262626] border-b-[#1e1e1e] bg-[#363636]" />
      <div className="h-5 bg-[#2a2a2a]" />
      {layers.map((layer) => (
        <div key={layer.name} className="h-[25px] border-b border-[#303030] bg-[#3a3a3a]" />
      ))}
      {/* playhead */}
      <div className="absolute top-8 bottom-0 left-1 w-[3px] bg-[#83202f]" />
      <svg width="10" height="32" viewBox="0 0 10 32" className="absolute top-px left-0">
        <rect x="0.500" y="0.500" width="9" height="10" fill="#999" stroke="#111" />
        <path d="M0.500 12.500H9.500V24L5 29.500 0.500 24Z" fill="#b39c37" stroke="#cbb968" />
        <path d="M5 29V32" stroke="#000" strokeWidth="2" />
      </svg>
      <span className="absolute top-[13px] left-3 flex h-[19px] w-[31px] items-center justify-center rounded-xs bg-[#0a0a0a] text-xs font-semibold text-[#e9e6bd]">0:00</span>
    </div>
  </section>
);

const PlayerButton = ({ label, children }: { label: string; children: React.ReactNode }) => (
  <button aria-label={label} className="flex size-[54px] items-center justify-center rounded bg-[#303030]">
    {children}
  </button>
);

const PlayerOverlay = () => (
  <>
    <div className="absolute top-[9px] left-[9px]">
      <PlayerButton label="Back">
        <svg width="54" height="54" viewBox="0 0 54 54" fill="none" stroke={ORANGE} strokeWidth="4.600" strokeLinecap="round" strokeLinejoin="round">
          <path d="M14 13 5.500 19.500 14 26M6 19.500H37Q48.500 20 48.500 30.500T37 41H25" />
        </svg>
      </PlayerButton>
    </div>

    {/* AskVideo mark */}
    <div className="absolute right-1 bottom-10 flex items-start">
      <span className="font-['Open_Sans',sans-serif] text-xl leading-8 font-bold text-[#a9a9a9]">AskVideo</span>
      <svg width="20" height="32" viewBox="0 0 20 32">
        <path d="M8 26V18H4Q1.500 18 1.500 15V5Q1.500 1.500 5 1.500H15Q18.500 1.500 18.500 5V13Q18.500 16 16 18.500L8.500 25" fill="none" stroke="#a9a9a9" strokeWidth="2.600" />
        <path d="M7.500 6V13.500L13.500 9.700Z" fill="#a9a9a9" />
      </svg>
    </div>

    <div className="absolute inset-x-0 bottom-[59px] mx-auto flex h-[46px] w-[510px] justify-center">
      <svg width="510" height="46" viewBox="1 0 510 46" className="absolute inset-0">
        <path d="M0 39 45 11H63L80 0H430L449 11H465L508 39H375L364 46H148L136 39Z" fill="#171717" />
      </svg>
      <span className="relative font-['Inter',sans-serif] text-[19px] leading-[44px] font-semibold text-white">00:03/04:00</span>
    </div>

    <div className="absolute inset-x-2 bottom-[9px] flex items-start gap-1 pl-px">
      <PlayerButton label="Previous">
        <svg width="54" height="54" viewBox="0 0 54 54" fill={ORANGE}>
          <rect x="9" y="9" width="13" height="37" rx="1.500" />
          <path d="M45 9V44L21 28Z" />
        </svg>
      </PlayerButton>
      <PlayerButton label="Pause">
        <svg width="54" height="54" viewBox="0 0 54 54" fill={ORANGE}>
          <rect x="9" y="9" width="15" height="37" rx="1.500" />
          <rect x="29" y="9" width="15" height="37" rx="1.500" />
        </svg>
      </PlayerButton>
      <PlayerButton label="Next">
        <svg width="54" height="54" viewBox="0 0 54 54" fill={ORANGE}>
          <rect x="31" y="9" width="13" height="37" rx="1.500" />
          <path d="M8 9V44L32 28Z" />
        </svg>
      </PlayerButton>
      <div className="relative mt-[13px] ml-1 flex h-[28px] flex-1 rounded-sm bg-[#171717]">
        <span className="w-5 rounded-l-xs bg-[#ff5f00]" />
        <svg width="28" height="64" viewBox="0 0 28 64" className="absolute -top-[18px] left-[13px]">
          <path d="M14 0 28 15V49L14 64 0 49V15Z" fill="#303030" />
        </svg>
      </div>
    </div>
  </>
);

export default function App() {
  return (
    <main className="relative flex h-screen flex-col overflow-hidden bg-black py-10 font-['Noto_Sans',sans-serif] text-[13px] text-[#dedede]">
      <header className="flex h-5 shrink-0 items-center border-b border-[#777] bg-linear-to-b from-[#e2e2e2] to-[#acacac] pl-2">
        <span className="size-[13px] rounded-full border border-[#8a1c1c] bg-[#d8504a]" />
        <span className="ml-8 size-[13px] rounded-full border border-[#3c7a35] bg-[#7ec873]" />
        <h1 className="flex flex-1 items-center justify-center gap-[5px] pl-[250px] text-[15px] leading-5 text-[#2c2c2c]">
          <span className="flex h-[14px] w-[14px] items-center justify-center bg-[#261a68] font-['Liberation_Sans',sans-serif] text-[9px] leading-none text-[#a79df0]">An</span>
          example1.html - Edge Animate CC
        </h1>
      </header>
      <ToolBar />
      <div className="flex min-h-0 flex-1">
        <PropertiesPanel />
        <div className="ml-1 flex min-w-0 flex-1 flex-col">
          <StagePanel />
          <TimelinePanel />
        </div>
      </div>
      <PlayerOverlay />
    </main>
  );
}
